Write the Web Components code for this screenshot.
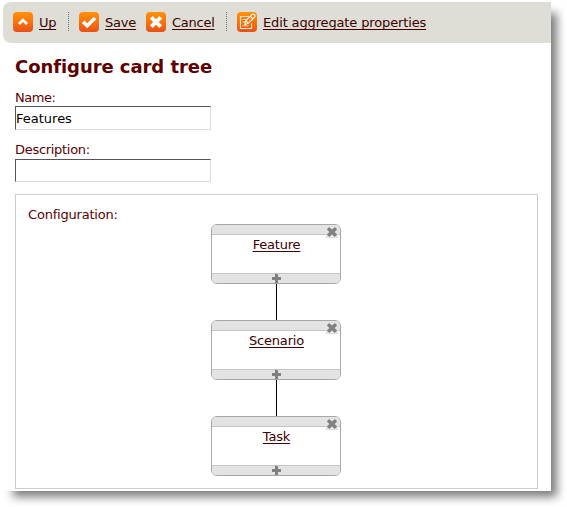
<!DOCTYPE html>
<html lang="en">
<head>
<meta charset="utf-8">
<title>Configure card tree</title>
<style>
html,body{margin:0;background:#fff}
body{width:567px;height:507px;overflow:hidden;font:13px/16px "DejaVu Sans",Verdana,sans-serif;color:#600000}
</style>
</head>
<body>
<app-window>
  <tool-bar slot="toolbar">
    <tool-action icon="up" style="--s:-.3px;width:43px">Up</tool-action>
    <tool-divider></tool-divider>
    <tool-action icon="save" style="--s:-.2px;width:57px">Save</tool-action>
    <tool-action icon="cancel" style="--s:-.25px;width:68px">Cancel</tool-action>
    <tool-divider></tool-divider>
    <tool-action icon="edit" style="--s:-.14px">Edit aggregate properties</tool-action>
  </tool-bar>
  <page-title>Configure card tree</page-title>
  <text-field label="Name:" value="Features" style="height:52px;--h:24px;--s:-.45px"></text-field>
  <text-field label="Description:" style="height:53px;--h:23px;--gap:1px;--s:-.3px"></text-field>
  <config-panel label="Configuration:">
    <tree-card>Feature</tree-card>
    <tree-card>Scenario</tree-card>
    <tree-card>Task</tree-card>
  </config-panel>
</app-window>
<script>
const define = (name, html, setup) => customElements.define(name, class extends HTMLElement {
  connectedCallback() {
    if (this.shadowRoot) return;
    const root = this.attachShadow({mode: 'open'});
    root.innerHTML = '<style>*{box-sizing:border-box}</style>' + html;
    if (setup) setup(this, root);
  }
});

define('app-window', `<style>
:host{display:block;position:relative;width:551px;height:491px}
.shade{position:absolute;inset:0;clip-path:inset(0 -16px -16px 0)}
.shade::before{content:"";position:absolute;left:13px;top:13px;right:-6px;bottom:-6px;background:#7c7c7c;filter:blur(5px)}
.page{position:relative;height:491px;background:#fff;padding-top:2px}
.content{padding:0 13px 0 15px}
</style><div class="shade"></div><div class="page"><slot name="toolbar"></slot><div class="content"><slot></slot></div></div>`);

define('tool-bar', `<style>
:host{display:flex;box-sizing:border-box;height:41px;margin-left:3px;padding:10px 0 0 10px;background:#deded6;border-radius:8px 0 0 8px}
</style><slot></slot>`);

define('tool-divider', `<style>
:host{display:block;width:1px;height:19px;margin:0 10px 0 2px;background:repeating-linear-gradient(#777 0 1px,transparent 1px 2px)}
</style>`);

const glyphs = {
  up: '<path d="M6 12L10 8l4 4" fill="none" stroke="#fff" stroke-width="2.6"/>',
  save: '<path d="M4.2 9.8l4 4L16 6" fill="none" stroke="#fff" stroke-width="3.6"/>',
  cancel: '<path d="M5.3 5.3l9.4 9.4M14.7 5.3l-9.4 9.4" fill="none" stroke="#fff" stroke-width="4"/>',
  edit: '<path d="M11.5 4.5h-8v12h11v-5" fill="none" stroke="#ffe4cc" stroke-width="1.2"/><path d="M5.5 7.5h4M5.5 10h2.5M5.5 13.8h6" stroke="#ffd0a5" fill="none"/><path d="M7.8 12.5l1-3.8L14.9 2.5q1.2-.9 2.4.2t.2 2.4L11.3 11.3zM13.2 4.2l2.6 2.6M8.8 8.7l2.5 2.6 4-4" fill="none" stroke="#fff" stroke-width="1.1"/>'
};
define('tool-action', `<style>
:host{display:flex;flex:none;height:20px;margin-right:10px;color:#400000}
svg{flex:none;width:20px;height:20px;margin-right:6px}
a{white-space:nowrap;margin-top:3px;height:16px;line-height:16px;letter-spacing:var(--s,0);text-decoration:underline;text-underline-offset:2px;text-decoration-thickness:1px;text-decoration-skip-ink:none}
</style><svg viewBox="0 0 20 20"><defs><linearGradient id="g" x2="0" y2="1"><stop stop-color="#ff9108"/><stop offset=".5" stop-color="#f8740c"/><stop offset="1" stop-color="#e65018"/></linearGradient></defs><rect width="20" height="20" rx="4" fill="url(#g)"/><g id="glyph"></g></svg><a><slot></slot></a>`,
(el, root) => { root.getElementById('glyph').innerHTML = glyphs[el.getAttribute('icon')]; });

define('page-title', `<style>
:host{display:block;height:47px;padding-top:13px;box-sizing:border-box;font-size:18px;font-weight:bold;line-height:22px;letter-spacing:-.06px;white-space:nowrap}
</style><slot></slot>`);

define('text-field', `<style>
:host{display:flex;flex-direction:column;align-items:flex-start}
label{height:16px;margin-bottom:var(--gap,0);letter-spacing:var(--s,0)}
.box{width:196px;height:var(--h);border:1px solid;border-color:#555 #ddd #ddd #555;color:#000;line-height:23px;background:#fff}
</style><label></label><div class="box"></div>`,
(el, root) => {
  root.querySelector('label').textContent = el.getAttribute('label');
  root.querySelector('.box').textContent = el.getAttribute('value') || '';
});

define('config-panel', `<style>
:host{display:block;box-sizing:border-box;height:295px;margin-top:-1px;border:1px solid #ccc;padding:12px 12px 0}
.label{height:17px;letter-spacing:-.2px}
.tree{display:flex;flex-direction:column;gap:36px;width:130px;margin-left:183px;background:linear-gradient(#000,#000) 65px 0/1px 100% no-repeat}
</style><div class="label"></div><div class="tree"><slot></slot></div>`,
(el, root) => { root.querySelector('.label').textContent = el.getAttribute('label'); });

define('tree-card', `<style>
:host{display:grid;grid-template-rows:10px 38px 10px;box-sizing:border-box;width:130px;height:60px;border:1px solid #a6a6a6;border-radius:6px;overflow:hidden;background:#fff;color:#400000}
.top{background:#e3e3e3;border-bottom:1px solid #c6c6c6;position:relative}
.bottom{background:#e3e3e3;border-top:1px solid #c6c6c6;display:flex;justify-content:center}
.name{text-align:center;padding:2px 0 0 1px}
.name span{letter-spacing:-.2px;text-decoration:underline;text-underline-offset:2px;text-decoration-thickness:1px;text-decoration-skip-ink:none}
svg{display:block}
.close{position:absolute;right:2px;top:1px;width:12px;height:12px;background:#e3e3e3}
.add{width:9px;height:9px}
</style><div class="top"><svg class="close" viewBox="0 0 12 12"><path d="M2 2.2l8 7.6M10 2.2l-8 7.6" stroke="#808080" stroke-width="3.4"/></svg></div>
<div class="name"><span><slot></slot></span></div>
<div class="bottom"><svg class="add" viewBox="0 0 9 9"><path d="M0 4.5h9M4.5 0v9" stroke="#808080" stroke-width="3"/></svg></div>`);
</script>
</body>
</html>
